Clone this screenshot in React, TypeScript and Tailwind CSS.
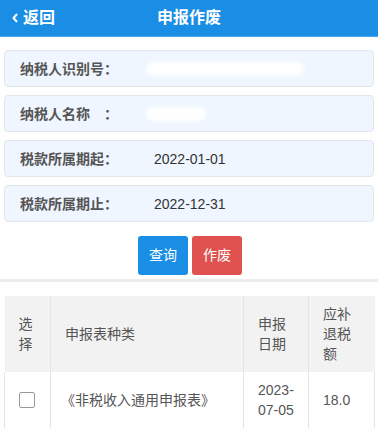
import React from "react";

const font = { fontFamily: '"Liberation Sans", "Noto Sans CJK SC", sans-serif' };

function Field({ label, value, mask }: { label: string; value?: string; mask?: number }) {
  return (
    <div className="flex h-[37px] items-center rounded-[4px] border border-[#e1e6ec] bg-[#eff6ff] pl-[15px]">
      <div className="w-[134px] shrink-0 text-[14px] font-bold leading-[20px] text-[#555]">{label}</div>
      {value ? (
        <div className="text-[14px] leading-[20px] text-[#333]">{value}</div>
      ) : (
        <div className="relative -ml-[8px] h-[14px]" style={{ width: mask }}>
          <div className="absolute inset-0 rounded-full bg-white blur-[2px]" />
        </div>
      )}
    </div>
  );
}

export default function App() {
  return (
    <div className="min-h-[428px] w-[378px] bg-white" style={font}>
      <div className="relative flex h-[37px] items-center border-b border-[#4aa6ee] bg-[#1a8de5] text-white">
        <div className="flex items-center pl-[11px] text-[16px] font-bold leading-[20px]">
          <svg width="8" height="12" viewBox="0 0 8 12" className="mr-[4px]">
            <path d="M6 2 L2.5 6 L6 10" stroke="white" strokeWidth="2" fill="none" />
          </svg>
          返回
        </div>
        <div className="absolute inset-x-0 top-0 flex h-[36px] items-center justify-center text-[16px] font-bold">
          申报作废
        </div>
      </div>

      <div className="mt-[13px] flex flex-col gap-[8px] px-[4px]">
        <Field label="纳税人识别号：" mask={158} />
        <Field label={"纳税人名称\u3000："} mask={60} />
        <Field label="税款所属期起：" value="2022-01-01" />
        <Field label="税款所属期止：" value="2022-12-31" />
      </div>

      <div className="mt-[14px] flex justify-center gap-[4px] pl-[2px]">
        <button className="h-[39px] w-[50px] rounded-[3px] bg-[#1a8de5] text-[14px] text-white">查询</button>
        <button className="h-[39px] w-[50px] rounded-[3px] bg-[#e0524f] text-[14px] text-white">作废</button>
      </div>

      <div className="mt-[4px] h-[3px] bg-[#ececec]" />

      <div className="mt-[14px] px-[4px]">
        <table className="w-[370px] table-fixed border-collapse text-[14px] leading-[20px] text-[#555]">
          <colgroup>
            <col className="w-[46px]" />
            <col className="w-[193px]" />
            <col className="w-[65px]" />
            <col className="w-[66px]" />
          </colgroup>
          <thead>
            <tr className="bg-[#f2f2f2]">
              <th className="border-r border-[#e4e4e4] px-[14px] py-[8px] text-left font-normal">选择</th>
              <th className="border-r border-[#e4e4e4] px-[14px] py-[8px] text-left font-normal">申报表种类</th>
              <th className="border-r border-[#e4e4e4] px-[14px] py-[8px] text-left font-normal">申报日期</th>
              <th className="px-[14px] py-[8px] text-left font-normal">应补退税额</th>
            </tr>
          </thead>
          <tbody>
            <tr>
              <td className="border-x border-[#e4e4e4] px-[14px] py-[8px]">
                <div className="h-[16px] w-[16px] rounded-[2px] border border-[#999] bg-white" />
              </td>
              <td className="border-r border-[#e4e4e4] pl-[10px] pr-[14px] py-[8px]">《非税收入通用申报表》</td>
              <td className="border-r border-[#e4e4e4] px-[14px] py-[8px]">2023-07-05</td>
              <td className="border-r border-[#e4e4e4] px-[14px] py-[8px]">18.0</td>
            </tr>
          </tbody>
        </table>
      </div>
    </div>
  );
}
